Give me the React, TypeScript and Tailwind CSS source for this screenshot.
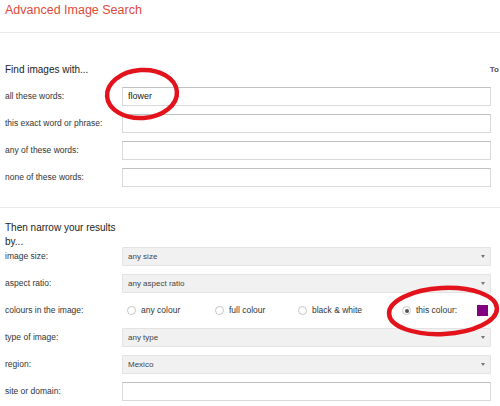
import React from "react";

const font = { fontFamily: '"Liberation Sans", Arial, sans-serif' };

const TextRow = ({ label, value }: { label: string; value?: string }) => (
  <div className="flex h-[27px] items-center">
    <div className="w-[117px] shrink-0 text-[8.5px] text-[#333]">{label}</div>
    <div className="flex h-[19px] w-[369px] items-center border border-[#d9d9d9] border-t-[#c0c0c0] bg-white px-[5px] text-[9px] text-[#222]">
      {value}
    </div>
  </div>
);

const SelectRow = ({ label, value }: { label: string; value: string }) => (
  <div className="flex h-[27px] items-center">
    <div className="w-[117px] shrink-0 text-[8.5px] text-[#333]">{label}</div>
    <div className="flex h-[19px] w-[369px] items-center justify-between rounded-[1px] border border-[#e3e3e3] bg-[#f1f1f1] pl-[5px] pr-[5px] text-[8px] text-[#444]">
      <span>{value}</span>
      <span className="h-0 w-0 border-x-[2.5px] border-t-[3px] border-x-transparent border-t-[#777]" />
    </div>
  </div>
);

const Radio = ({ label, checked, className }: { label: string; checked?: boolean; className: string }) => (
  <div className={`flex items-center gap-[5px] ${className}`}>
    <span className="flex h-[9px] w-[9px] items-center justify-center rounded-full border border-[#c6c6c6] bg-white">
      {checked && <span className="h-[4px] w-[4px] rounded-full bg-[#555]" />}
    </span>
    <span className="text-[8.5px] text-[#333]">{label}</span>
  </div>
);

export default function App() {
  return (
    <div className="relative h-[406px] w-[500px] overflow-hidden bg-white" style={font}>
      <div className="h-[33px] border-b border-[#ebebeb] pl-[5px] pt-[3px]">
        <h1 className="text-[12.5px] leading-[15px] text-[#dd4b39]">Advanced Image Search</h1>
      </div>

      <div className="pl-[5px] pt-[30px]">
        <div className="flex h-[14px] items-center justify-between">
          <h2 className="text-[10px] leading-[14px] text-[#222]">Find images with...</h2>
          <span className="mr-[1px] text-[8px] font-bold text-[#555]">To</span>
        </div>
        <div className="mt-[6px]">
          <TextRow label="all these words:" value="flower" />
          <TextRow label="this exact word or phrase:" />
          <TextRow label="any of these words:" />
          <TextRow label="none of these words:" />
        </div>
      </div>

      <div className="mt-[16px] border-t border-[#ebebeb] pl-[5px] pt-[13px]">
        <h2 className="h-[22px] w-[115px] text-[10px] leading-[14px] text-[#222]">Then narrow your results by...</h2>
        <SelectRow label="image size:" value="any size" />
        <SelectRow label="aspect ratio:" value="any aspect ratio" />
        <div className="flex h-[27px] items-center">
          <div className="w-[117px] shrink-0 text-[8.5px] text-[#333]">colours in the image:</div>
          <div className="flex items-center pl-[5px]">
            <Radio label="any colour" className="w-[88px]" />
            <Radio label="full colour" className="w-[83px]" />
            <Radio label="black &amp; white" className="w-[104px]" />
            <Radio label="this colour:" checked className="w-[75px]" />
            <span className="h-[11px] w-[11px] bg-[#800080]" />
          </div>
        </div>
        <SelectRow label="type of image:" value="any type" />
        <SelectRow label="region:" value="Mexico" />
        <TextRow label="site or domain:" />
      </div>

      <svg className="pointer-events-none absolute left-0 top-0" width="500" height="406" viewBox="0 0 500 406">
        <ellipse cx="142" cy="94" rx="35" ry="24" fill="none" stroke="#e3131b" strokeWidth="4.5" transform="rotate(-4 142 94)" />
        <ellipse cx="443" cy="311" rx="54" ry="23" fill="none" stroke="#e3131b" strokeWidth="4.5" transform="rotate(-3 443 311)" />
      </svg>
    </div>
  );
}
